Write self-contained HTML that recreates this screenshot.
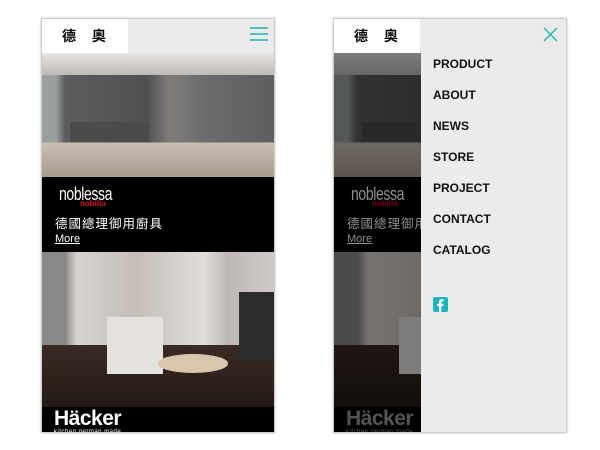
<!DOCTYPE html>
<html><head><meta charset="utf-8"><style>
*{margin:0;padding:0;box-sizing:border-box}
body{width:600px;height:450px;background:#fff;position:relative;overflow:hidden;font-family:"Liberation Sans","Noto Sans CJK TC",sans-serif}
.ph{position:absolute;top:18px;width:234px;height:415px;overflow:hidden;border:1px solid #ccc;box-shadow:0 0 2px #bbb}
.hdr{position:absolute;left:0;top:0;width:100%;height:34px;background:#ebebeb}
.logo{position:absolute;left:0;top:0;width:86px;height:34px;background:#fff;font-size:14px;font-weight:bold;text-align:center;line-height:34px;letter-spacing:6px;padding-left:4px}
.img1{position:absolute;left:0;top:34px;width:100%;height:124px;background:
linear-gradient(180deg,transparent 0 72%,#c9bfb3 72%,#a89c8f 100%),
linear-gradient(90deg,#9aa09e 0 6%,#5b5c5e 10%,#4f5052 45%,#807d7b 55%,#6c6c6e 70%,#5d5e60 100%)}
.img1 .ct{position:absolute;left:12%;top:56%;width:34%;height:16%;background:#4c4b4b}
.img1 .ceil{position:absolute;left:0;top:0;width:100%;height:22px;background:linear-gradient(#e6e3e0,#bdbab7)}
.blk1{position:absolute;left:0;top:158px;width:100%;height:75px;background:#000;color:#fff}
.img2{position:absolute;left:0;top:233px;width:100%;height:155px;background:
linear-gradient(180deg,transparent 0 60%,#3a2a23 60%,#231a16 100%),
linear-gradient(90deg,#8a8887 0 10%,#d8d3cf 15%,#c5beb9 40%,#e2ddd9 70%,#bdb8b5 80%,#cfcac7 100%)}
.img2 .isl{position:absolute;left:28%;top:42%;width:24%;height:37%;background:#e6e2de}
.img2 .ov{position:absolute;right:0;top:26%;width:15%;height:44%;background:#2d2c2c}
.img2 .rug{position:absolute;left:50%;top:66%;width:30%;height:12%;background:#d8c7ad;border-radius:50%}
.blk2{position:absolute;left:0;top:388px;width:100%;height:30px;background:#000;color:#fff}
.nob{position:absolute;left:17px;top:7px;font-size:18px;letter-spacing:-0.5px;transform:scaleX(.78);transform-origin:left}
.nob2{position:absolute;left:38px;top:22px;font-size:8px;color:#d0122a;font-weight:bold}
.zh{position:absolute;left:13px;top:36px;font-size:12.5px;letter-spacing:1px}
.more{position:absolute;left:13px;top:56px;font-size:11px;text-decoration:underline}
.hk{position:absolute;left:12px;top:0px;font-size:21px;font-weight:bold;letter-spacing:-0.5px}
.hks{position:absolute;left:12px;top:22px;font-size:6px;letter-spacing:0.5px}
.dim{position:absolute;left:0;top:34px;width:87px;height:400px;background:rgba(0,0,0,.45)}
.menu{position:absolute;left:87px;top:0;width:147px;height:415px;background:#ebebeb}
.menu div{position:absolute;left:12px;font-size:12px;font-weight:bold;color:#111}
</style></head><body>
<div class="ph" style="left:41px">
 <div class="hdr"></div><div class="logo">德 奧</div>
 <svg style="position:absolute;left:208px;top:7px" width="18" height="16"><g stroke="#1eb3b8" stroke-width="1.6"><line x1="0" y1="2" x2="18" y2="2"/><line x1="0" y1="8" x2="18" y2="8"/><line x1="0" y1="14" x2="18" y2="14"/></g></svg>
 <div class="img1"><div class="ceil"></div><div class="ct"></div></div>
 <div class="blk1"><div class="nob">noblessa</div><div class="nob2">nobilia</div><div class="zh">德國總理御用廚具</div><div class="more">More</div></div>
 <div class="img2"><div class="isl"></div><div class="ov"></div><div class="rug"></div></div>
 <div class="blk2"><div class="hk">Häcker</div><div class="hks">kitchen.german.made.</div></div>
</div>
<div class="ph" style="left:333px">
 <div class="hdr"></div><div class="logo">德 奧</div>
 <div class="img1"><div class="ceil"></div><div class="ct"></div></div>
 <div class="blk1"><div class="nob">noblessa</div><div class="nob2">nobilia</div><div class="zh">德國總理御用廚具</div><div class="more">More</div></div>
 <div class="img2"><div class="isl"></div><div class="ov"></div><div class="rug"></div></div>
 <div class="blk2"><div class="hk" style="color:#999">Häcker</div><div class="hks" style="color:#999">kitchen.german.made.</div></div>
 <div class="dim"></div>
 <div class="menu">
  <svg style="position:absolute;left:122px;top:8px" width="15" height="15"><g stroke="#1eb3b8" stroke-width="1.4"><line x1="1" y1="1" x2="14" y2="14"/><line x1="14" y1="1" x2="1" y2="14"/></g></svg>
  <div style="top:38px">PRODUCT</div>
  <div style="top:69px">ABOUT</div>
  <div style="top:100px">NEWS</div>
  <div style="top:131px">STORE</div>
  <div style="top:162px">PROJECT</div>
  <div style="top:193px">CONTACT</div>
  <div style="top:224px">CATALOG</div>
  <svg style="position:absolute;left:12px;top:278px" width="15" height="15"><rect width="15" height="15" rx="2" fill="#1eb3b8"/><path d="M8.3 15V9h2l.3-2.2H8.3V5.4c0-.6.2-1 1-1h1.3V2.4c-.2 0-1-.1-1.8-.1-1.8 0-2.9 1-2.9 3v1.5H4V9h1.9v6z" fill="#fff"/></svg>
 </div>
</div>
</body></html>
